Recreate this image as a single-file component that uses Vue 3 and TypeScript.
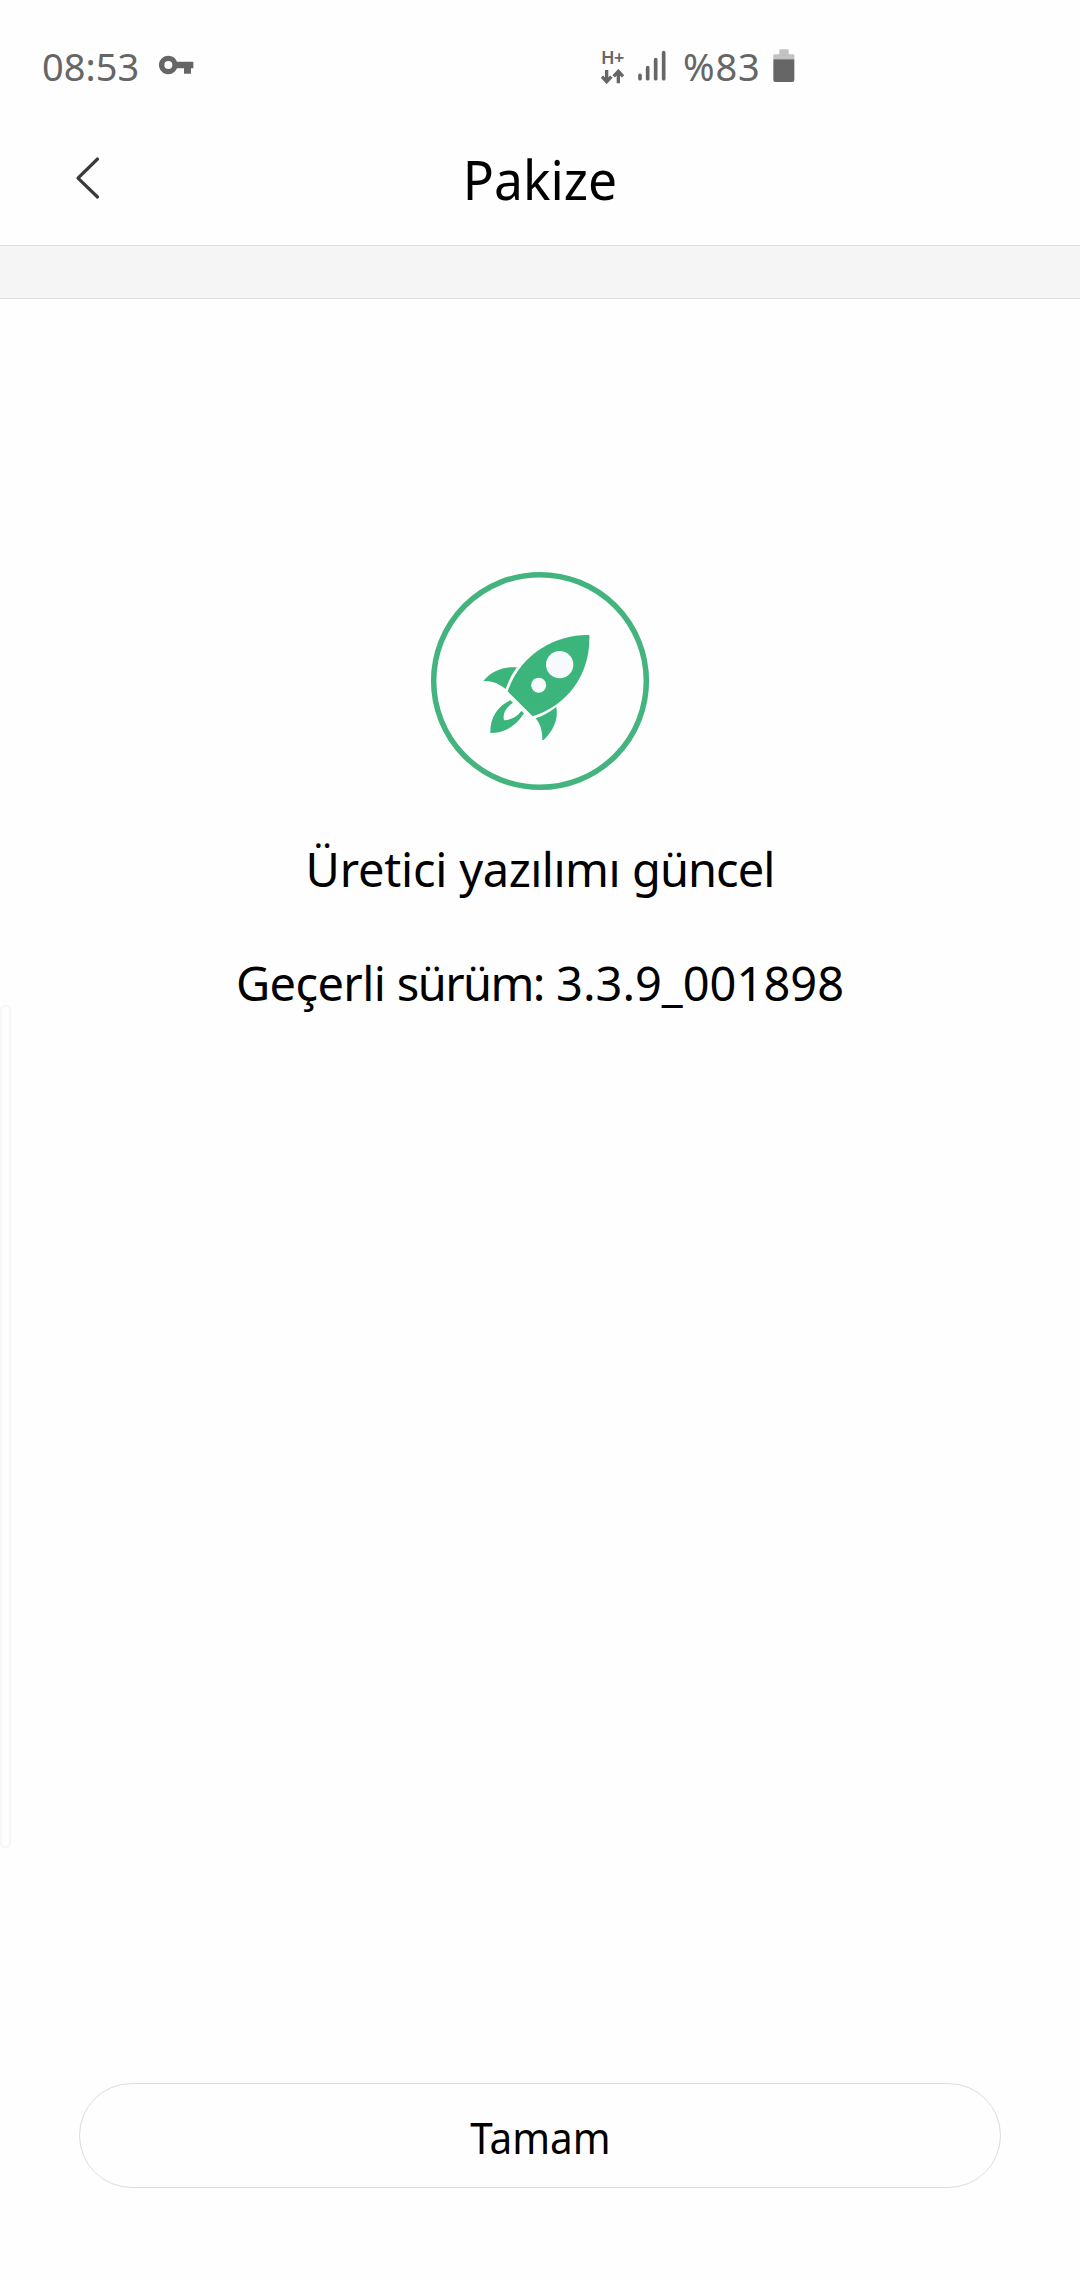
<script setup lang="ts">
interface Word {
  text: string
  tracking: number
}

const title = 'Pakize'
const status: Word[] = [
  { text: 'Üretici ', tracking: -0.2 },
  { text: 'yazılımı ', tracking: -0.5 },
  { text: 'güncel', tracking: -0.95 },
]
const version: Word[] = [
  { text: 'Geçerli ', tracking: -0.6 },
  { text: 'sürüm:', tracking: -1.6 },
  { text: ' 3.3.9_001898', tracking: 0 },
]
</script>

<template>
  <div class="screen">
    <div class="status-bar">
      <span class="clock">08:53</span>
      <svg class="key" width="36" height="20" viewBox="0 0 108 60">
        <path fill="#666" fill-rule="evenodd" d="M28 2a28 28 0 1 0 26 38H75V56H96V40H103V20H54A28 28 0 0 0 28 2ZM28 18a12 12 0 1 1 0 24a12 12 0 0 1 0-24Z" />
      </svg>
      <div class="network">
        <span class="network-type">H+</span>
        <svg width="23" height="15" viewBox="0 0 69 45" fill="none" stroke="#666" stroke-width="10">
          <path d="M17 3V37M3 23L17 38L31 23M52 43V8M38 22L52 7L66 22" />
        </svg>
      </div>
      <svg class="signal" width="28" height="32" viewBox="0 0 84 96" stroke="#666" stroke-width="11" stroke-linecap="round">
        <path d="M6 76V86M29 53V86M53 29V86M77 8V86" />
      </svg>
      <span class="percent">%83</span>
      <svg class="battery" width="22" height="33" viewBox="0 0 66 99">
        <path fill="#c2c2c2" d="M1 31V20Q1 16 5 16H19V4Q19 1 22 1H44Q47 1 47 4V16H60Q64 16 64 20V31Z" />
        <path fill="#666" d="M1 31H64V93Q64 99 58 99H7Q1 99 1 93Z" />
      </svg>
    </div>

    <header class="header">
      <button class="back" aria-label="Geri">
        <svg width="26" height="44" viewBox="0 0 26 44" fill="none" stroke="#3a3a3a" stroke-width="3.2" stroke-linecap="round" stroke-linejoin="round">
          <path d="M22.5 3L3 22.2L22.5 41" />
        </svg>
      </button>
      <h1 class="title">{{ title }}</h1>
    </header>
    <div class="divider"></div>

    <main class="content">
      <svg class="rocket" width="240" height="240" viewBox="0 0 720 720">
        <circle cx="360" cy="363" r="319" fill="none" stroke="#43b47d" stroke-width="16.5" />
        <g fill="#3bb57b">
          <path d="M508 225C420 222 303 273 263 394L338 469C447 434 512 340 508 225Z" />
          <path d="M291 322C253 319 216 332 190 363C216 362 237 371 257 387C266 362 276 342 291 322Z" />
          <path d="M347 475C363 495 367 515 367 540H371C399 513 416 479 409 441C390 456 370 467 347 475Z" />
          <path d="M271 421L279 428C258 443 247 460 252 481C273 480 291 470 304 453L312 460C287 498 256 519 211 519C210 473 232 439 271 421Z" />
        </g>
        <g fill="#f7fafc">
          <circle cx="419" cy="314" r="41" />
          <circle cx="356" cy="375.5" r="22.5" />
        </g>
      </svg>
      <p class="status">
        <span v-for="word in status" :key="word.text" :style="{ letterSpacing: word.tracking + 'px' }">{{ word.text }}</span>
      </p>
      <p class="version">
        <span v-for="word in version" :key="word.text" :style="{ letterSpacing: word.tracking + 'px' }">{{ word.text }}</span>
      </p>
    </main>

    <footer class="footer">
      <button class="confirm"><span class="confirm-label">Tamam</span></button>
    </footer>
    <div class="edge-handle"></div>
  </div>
</template>

<style>
body {
  margin: 0;
  background: #fff;
}
</style>

<style scoped>
.screen {
  position: relative;
  box-sizing: border-box;
  width: 1080px;
  height: 2280px;
  display: flex;
  flex-direction: column;
  overflow: hidden;
  background: #fefefe;
  color: #000;
  font-family: 'Noto Sans', sans-serif;
}
.status-bar {
  height: 132px;
  flex: none;
  display: flex;
  align-items: center;
  box-sizing: border-box;
  padding: 0 0 0 42px;
  color: #666;
  font-size: 38px;
  line-height: 52px;
}
.clock {
  width: 117px;
  flex: none;
}
.key {
  width: 36px;
  flex: none;
}
.network {
  width: 26px;
  height: 35px;
  margin-left: 406px;
  display: flex;
  flex-direction: column;
  justify-content: space-between;
}
.network-type {
  font-size: 18px;
  line-height: 17px;
  font-weight: 600;
  letter-spacing: -0.5px;
}
.signal {
  margin-left: 11px;
}
.percent {
  width: 90px;
  margin-left: 17px;
  letter-spacing: 0.8px;
}
.battery {
  margin-left: 0;
}
.clock,
.percent {
  padding-bottom: 1px;
}
.battery,
.key {
  position: relative;
  top: -1px;
}
.header {
  height: 113px;
  flex: none;
  display: grid;
  grid-template-columns: 180px 1fr 180px;
}
.back {
  border: 0;
  padding: 24px 0 0 75px;
  background: none;
  display: flex;
  align-items: flex-start;
}
.title {
  margin: 0;
  padding-top: 10px;
  font-size: 54px;
  font-weight: 400;
  line-height: 74px;
  text-align: center;
  transform: scaleX(0.955);
}
.divider {
  box-sizing: border-box;
  height: 54px;
  flex: none;
  border-top: 1px solid #e0e0e0;
  border-bottom: 1px solid #e0e0e0;
  background: #f5f5f5;
}
.content {
  flex: 1;
  display: flex;
  flex-direction: column;
  align-items: center;
  padding-top: 261px;
}
.rocket {
  flex: none;
}
.status,
.version {
  margin: 0;
  display: flex;
  font-size: 47px;
  line-height: 64px;
  white-space: pre;
}
.status {
  margin-top: 37px;
}
.version {
  margin-top: 50px;
}
.footer {
  flex: none;
  padding: 0 79px 92px;
}
.confirm {
  width: 100%;
  height: 105px;
  box-sizing: border-box;
  border: 1px solid #dcdcdc;
  border-radius: 53px;
  background: #fefefe;
  color: #000;
  font-family: inherit;
  font-size: 43.5px;
  line-height: 60px;
  padding: 2px 0 0;
}
.confirm-label {
  display: inline-block;
  transform: scaleX(0.93);
}
.edge-handle {
  position: absolute;
  left: 0;
  top: 1005px;
  width: 11px;
  height: 843px;
  box-sizing: border-box;
  border: 2px solid #f7f7f7;
  border-radius: 5px;
}
</style>
